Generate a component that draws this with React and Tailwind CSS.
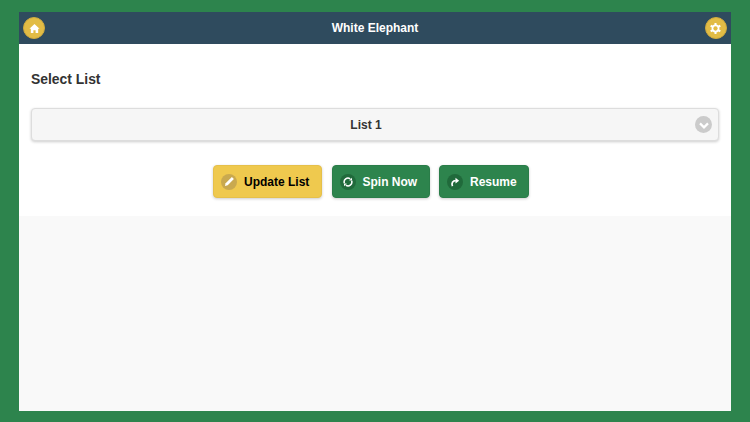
import React from "react";

const HomeIcon = () => (
  <svg width="11" height="11" viewBox="0 0 12 12"><path d="M6 1 L11.5 6.3 H10 V11 H7.2 V7.8 H4.8 V11 H2 V6.3 H0.5 Z" fill="#fff" /></svg>
);
const GearIcon = () => (
  <svg width="13" height="13" viewBox="0 0 14 14">
    <g stroke="#fff" strokeWidth="2.2">
      <path d="M7 1 V13 M1.8 4 L12.2 10 M12.2 4 L1.8 10" />
    </g>
    <circle cx="7" cy="7" r="4.2" fill="#fff" />
    <circle cx="7" cy="7" r="2.3" fill="#e2bc45" />
  </svg>
);
const Pencil = () => (
  <svg width="11" height="11" viewBox="0 0 12 12"><path d="M8.6 1.2 L10.8 3.4 L4 10.2 L1 11 L1.8 8 Z" fill="#fff" /></svg>
);
const Spin = () => (
  <svg width="10" height="10" viewBox="0 0 12 12" fill="none" stroke="#fff" strokeWidth="1.8">
    <path d="M1.6 7.4 A4.6 4.6 0 0 1 8.6 2.2" />
    <path d="M10.4 4.6 A4.6 4.6 0 0 1 3.4 9.8" />
    <path d="M10.8 0.8 V4.2 H7.4 Z" fill="#fff" stroke="none" />
    <path d="M1.2 11.2 V7.8 H4.6 Z" fill="#fff" stroke="none" />
  </svg>
);
const Redo = () => (
  <svg width="10" height="10" viewBox="0 0 12 12" fill="none">
    <path d="M3 11 C1.4 7.4 3.2 4.4 7 4.4" stroke="#fff" strokeWidth="2" />
    <path d="M6.6 0.8 L11 4.4 L6.6 7.8 Z" fill="#fff" />
  </svg>
);
const Chevron = () => (
  <svg width="12" height="12" viewBox="0 0 12 12" fill="none"><path d="M2 4.4 L6 8.4 L10 4.4" stroke="#fff" strokeWidth="2.2" /></svg>
);

function ActionButton({ icon, label, className, dotClass }) {
  return (
    <button className={`h-[33px] flex items-center rounded-[4px] border shadow-[0_1px_3px_rgba(0,0,0,0.2)] pl-[7px] text-[12px] font-bold ${className}`}>
      <span className={`w-[16px] h-[16px] rounded-full flex items-center justify-center mr-[7px] ${dotClass}`}>{icon}</span>
      {label}
    </button>
  );
}

export default function App() {
  return (
    <div className="w-[750px] h-[422px] bg-[#2d844d] pt-[12px] pb-[11px] px-[19px] overflow-hidden font-['Liberation_Sans',Arial,sans-serif]">
      <div className="w-full h-full flex flex-col bg-[#f9f9f9]">
        <header className="h-[32px] shrink-0 bg-[#2f4b5e] flex items-center justify-between px-[4px] text-white">
          <span className="w-[22px] h-[22px] rounded-full bg-[#e2bc45] border border-[#cfaa3e] flex items-center justify-center"><HomeIcon /></span>
          <span className="text-[12px] font-bold">White Elephant</span>
          <span className="w-[22px] h-[22px] rounded-full bg-[#e2bc45] border border-[#cfaa3e] flex items-center justify-center"><GearIcon /></span>
        </header>
        <section className="h-[172px] shrink-0 bg-white px-[12px] pt-[27px]">
          <h2 className="text-[13.9px] leading-[16px] font-bold text-[#333]">Select List</h2>
          <div className="mt-[21px] h-[33px] relative flex items-center justify-center pr-[18px] rounded-[4px] border border-[#ddd] bg-[#f6f6f6] shadow-[0_1px_3px_rgba(0,0,0,0.2)] text-[12px] font-bold text-[#333]">
            List 1
            <span className="absolute right-[6px] top-[7px] w-[17px] h-[17px] rounded-full bg-[#cbcbcb] flex items-center justify-center"><Chevron /></span>
          </div>
          <div className="mt-[24px] flex justify-center gap-[9.5px] pr-[8px]">
            <ActionButton icon={<Pencil />} label="Update List" className="w-[109px] bg-[#efc94e] border-[#e6c04a] text-black" dotClass="bg-[#c9a94f]" />
            <ActionButton icon={<Spin />} label="Spin Now" className="w-[98px] bg-[#2d844d] border-[#2a7d49] text-white" dotClass="bg-[#206a3b]" />
            <ActionButton icon={<Redo />} label="Resume" className="w-[90px] bg-[#2d844d] border-[#2a7d49] text-white" dotClass="bg-[#206a3b]" />
          </div>
        </section>
      </div>
    </div>
  );
}
